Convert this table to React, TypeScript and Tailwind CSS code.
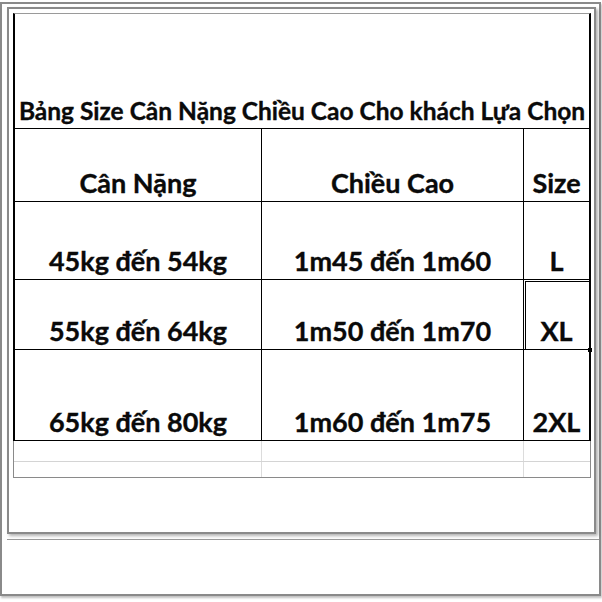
import React from "react";

const font = { fontFamily: '"Lato", "Open Sans", sans-serif' };

function Cell({
  w,
  children,
  last,
  sel,
}: {
  w: string;
  children?: React.ReactNode;
  last?: boolean;
  sel?: boolean;
}) {
  return (
    <div
      className={`${w} relative h-full flex items-end justify-center pb-[5px] ${
        last ? "" : "border-r border-black"
      }`}
    >
      {sel && (
        <div className="absolute left-[1px] top-[1px] right-[-1px] bottom-[-1px] border border-black">
          <div className="absolute right-[-3px] bottom-[-3px] w-[4px] h-[4px] bg-black" />
        </div>
      )}
      <span className="leading-none text-[27px] font-bold text-[#0a0a0a] whitespace-nowrap [-webkit-text-stroke:0.35px_#0a0a0a]">
        {children}
      </span>
    </div>
  );
}

function Row({ h, cells, selIdx }: { h: string; cells: string[]; selIdx?: number }) {
  return (
    <div className={`${h} flex border-b border-black`}>
      <Cell w="w-[247px]">{cells[0]}</Cell>
      <Cell w="w-[262px]">{cells[1]}</Cell>
      <Cell w="w-[65px]" last sel={selIdx === 2}>
        {cells[2]}
      </Cell>
    </div>
  );
}

export default function App() {
  return (
    <div className="w-[602px] h-[602px] bg-white pt-[2px]" style={font}>
      <div className="w-[601px] h-[594px] border-2 border-[#8a8a8a] pl-[5px] pt-[3px] flex flex-col shadow-[1px_2px_2px_rgba(0,0,0,0.25)]">
        <div className="w-[589px] h-[527px] border-2 border-[#8a8a8a] pl-[4px] pt-[4px] shadow-[2px_2px_3px_rgba(0,0,0,0.3)]">
          <div className="w-[578px] flex flex-col">
            <div className="border-l-2 border-r-2 border-black border-t border-t-[#9a9a9a] flex flex-col">
              <div className="h-[115px] flex items-end justify-center pb-[5px] border-b border-black">
                <span className="leading-none text-[24.5px] font-bold text-[#0a0a0a] whitespace-nowrap [-webkit-text-stroke:0.35px_#0a0a0a]">
                  Bảng Size Cân Nặng Chiều Cao Cho khách Lựa Chọn
                </span>
              </div>
              <Row h="h-[73px]" cells={["Cân Nặng", "Chiều Cao", "Size"]} />
              <Row h="h-[78px]" cells={["45kg đến 54kg", "1m45 đến 1m60", "L"]} />
              <Row h="h-[70px]" cells={["55kg đến 64kg", "1m50 đến 1m70", "XL"]} selIdx={2} />
              <Row h="h-[91px]" cells={["65kg đến 80kg", "1m60 đến 1m75", "2XL"]} />
            </div>
            <div className="border-l border-r border-b border-[#8a8a8a] flex flex-col">
              <div className="h-[21px] flex border-b border-[#d4d4d4]">
                <div className="w-[248px] border-r border-[#dcdcdc]" />
                <div className="w-[262px] border-r border-[#dcdcdc]" />
                <div className="flex-1" />
              </div>
              <div className="h-[15px] flex">
                <div className="w-[248px] border-r border-[#dcdcdc]" />
                <div className="w-[262px] border-r border-[#dcdcdc]" />
                <div className="flex-1" />
              </div>
            </div>
          </div>
        </div>
        <div className="mt-[5px] border-t border-[#9a9a9a]" />
      </div>
    </div>
  );
}
